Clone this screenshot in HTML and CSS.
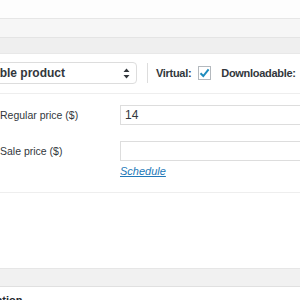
FILE: index.html
```html
<!DOCTYPE html>
<html lang="en">
<head>
  <meta charset="UTF-8" />
  <title>Product data</title>
  <link rel="stylesheet" href="styles.css">
</head>
<body>
  <div class="product-data">
    <div class="panel-top"></div>
    <div class="panel-tabs"></div>
    <div class="panel-sub"></div>

    <div class="type-bar">
      <div class="type-select">
        <span class="type-value">Variable product</span>
        <svg class="arrows" width="7" height="11" viewBox="0 0 7 11">
          <path d="M3.5 0.5 L6.5 4 L0.5 4 Z M3.5 10.5 L6.5 7 L0.5 7 Z" fill="#32373c" />
        </svg>
      </div>
      <span class="sep"></span>
      <label class="opt">Virtual:
        <span class="check">
          <svg width="11" height="10" viewBox="0 0 11 10">
            <path d="M1.5 5.2 L4.3 8 L9.6 1.3" fill="none" stroke="#1e8cbe" stroke-width="2" />
          </svg>
        </span>
      </label>
      <label class="opt">Downloadable:</label>
    </div>

    <div class="pricing">
      <div class="field">
        <label>Regular price ($)</label>
        <div class="input">14</div>
      </div>
      <div class="field">
        <label>Sale price ($)</label>
        <div class="input"></div>
      </div>
      <a class="schedule" href="#">Schedule</a>
    </div>

    <div class="blank"></div>
    <div class="gray-band"></div>
    <h3 class="next-title">Product short description</h3>
  </div>
</body>
</html>
```

FILE: styles.css
```css
/* WooCommerce product data box, cropped */

body {
  margin: 0;
  background-color: #ffffff;
  color: #32373c;
  font-family: 'Liberation Sans', Arial, sans-serif;
  overflow: hidden;
}

.product-data {
  width: 300px;
}

.panel-top {
  height: 18px;
  background-color: #fdfdfd;
  border-bottom: 1px solid #e6e6e6;
}

.panel-tabs {
  height: 18px;
  background-color: #f6f6f6;
  border-bottom: 1px solid #e4e4e4;
}

.panel-sub {
  height: 15px;
  background-color: #efefef;
  border-bottom: 1px solid #e8e8e8;
}

.type-bar {
  display: flex;
  align-items: center;
  height: 22px;
  padding: 8px 0 9px;
  border-bottom: 1px solid #eeeeee;
  white-space: nowrap;
}

.type-bar > * {
  flex-shrink: 0;
}

.type-select {
  display: flex;
  align-items: center;
  justify-content: space-between;
  box-sizing: border-box;
  width: 175px;
  height: 22px;
  margin-left: -38px;
  padding: 0 4px 0 8px;
  border: 1px solid #dddddd;
  border-radius: 4px;
  background-color: #ffffff;
  font-size: 12px;
  font-weight: bold;
  color: #32373c;
}

.arrows {
  margin-right: 2px;
}

.sep {
  width: 1px;
  height: 20px;
  margin: 0 8px 0 10px;
  background-color: #dddddd;
}

.opt {
  display: flex;
  align-items: center;
  font-size: 11px;
  font-weight: bold;
  letter-spacing: -0.3px;
  color: #32373c;
  margin-right: 10px;
}

.check {
  display: flex;
  align-items: center;
  justify-content: center;
  box-sizing: border-box;
  width: 13px;
  height: 14px;
  margin-left: 7px;
  border: 1px solid #b4b9be;
  background-color: #ffffff;
}

.pricing {
  padding: 11px 0 14px;
  border-bottom: 1px solid #eeeeee;
}

.field {
  display: flex;
  align-items: center;
  margin-bottom: 16px;
}

.field label {
  flex-shrink: 0;
  width: 120px;
  font-size: 10.5px;
  color: #32373c;
}

.input {
  flex-shrink: 0;
  box-sizing: border-box;
  width: 200px;
  height: 20px;
  padding: 2px 4px;
  border: 1px solid #dddddd;
  font-size: 12px;
  line-height: 15px;
  color: #32373c;
}

.schedule {
  display: block;
  width: fit-content;
  margin: -13px 0 0 120px;
  font-size: 11px;
  line-height: 14px;
  font-style: italic;
  color: #2278b8;
  text-decoration: underline;
}

.blank {
  height: 75px;
}

.gray-band {
  height: 17px;
  background-color: #f1f1f1;
  border-top: 1px solid #e6e6e6;
  border-bottom: 1px solid #e0e0e0;
}

.next-title {
  margin: 7px 0 0 -112px;
  font-size: 11px;
  font-weight: bold;
  color: #23282d;
}
```
